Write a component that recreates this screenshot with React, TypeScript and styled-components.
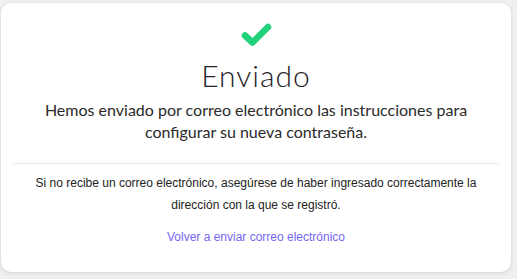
import React from "react";
import styled, { createGlobalStyle } from "styled-components";

const GlobalStyle = createGlobalStyle`
  html, body {
    margin: 0;
    padding: 0;
    background: #f0f0f0;
  }
  body {
    font-family: "Lato", "Noto Sans", sans-serif;
  }
`;

const Page = styled.div`
  padding: 3px 6px 7px 1px;
`;

const Card = styled.div`
  background: #ffffff;
  border-radius: 10px;
  box-shadow: 0 1px 4px rgba(0, 0, 0, 0.12);
  height: 269px;
  box-sizing: border-box;
  padding: 20px 12px 0 12px;
  display: flex;
  flex-direction: column;
  align-items: center;
`;

const CheckIcon = styled.svg`
  width: 31px;
  height: 24px;
  display: block;
`;

const Title = styled.h1`
  margin: 12px 0 0 0;
  font-family: "Lato", sans-serif;
  font-weight: 300;
  font-size: 30px;
  line-height: 32px;
  letter-spacing: 1px;
  color: #1f2327;
`;

const Lead = styled.p`
  margin: 8px 0 0 0;
  font-family: "Lato", sans-serif;
  font-size: 16px;
  line-height: 22px;
  color: #2a2a2a;
  text-align: center;
  max-width: 430px;
`;

const Divider = styled.hr`
  align-self: stretch;
  border: none;
  border-top: 1px solid #e6e6e6;
  margin: 20px 0 0 0;
`;

const Note = styled.p`
  margin: 8px 0 0 0;
  font-family: "Liberation Sans", Arial, sans-serif;
  font-size: 12px;
  line-height: 22px;
  color: #222222;
  text-align: center;
  max-width: 460px;
`;

const ResendLink = styled.a`
  margin-top: 10px;
  font-family: "Liberation Sans", Arial, sans-serif;
  font-size: 12px;
  line-height: 22px;
  color: #7367f0;
  text-decoration: none;
  cursor: pointer;
`;

export default function App() {
  return (
    <>
      <GlobalStyle />
      <Page>
        <Card>
          <CheckIcon viewBox="0 0 31 24" aria-hidden="true">
            <polyline
              points="4,12.5 11.5,19.5 27,4"
              fill="none"
              stroke="#22d17c"
              strokeWidth="6.5"
              strokeLinecap="round"
              strokeLinejoin="round"
            />
          </CheckIcon>
          <Title>Enviado</Title>
          <Lead>
            Hemos enviado por correo electrónico las instrucciones para
            configurar su nueva contraseña.
          </Lead>
          <Divider />
          <Note>
            Si no recibe un correo electrónico, asegúrese de haber ingresado
            correctamente la dirección con la que se registró.
          </Note>
          <ResendLink>Volver a enviar correo electrónico</ResendLink>
        </Card>
      </Page>
    </>
  );
}
